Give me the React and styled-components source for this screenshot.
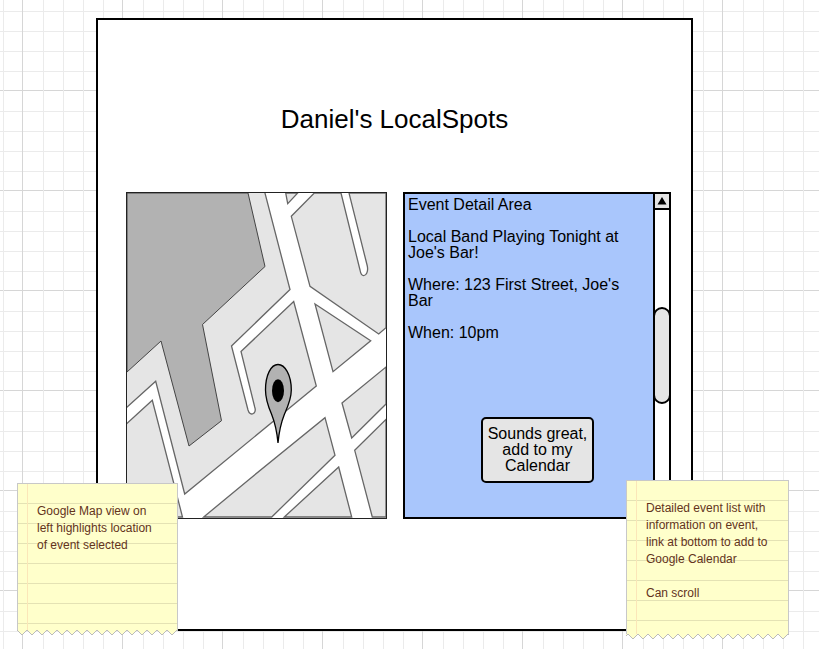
import React from "react";
import styled, { createGlobalStyle } from "styled-components";

const GlobalStyle = createGlobalStyle`
  *, *::before, *::after { box-sizing: border-box; }
  body {
    margin: 0;
    background: #fff;
    color: #000;
    font-family: "Liberation Sans", Arial, sans-serif;
  }
`;

const gridStops = `
  #d6d6d6 0 1px, transparent 1px 21px,
  #ebebeb 21px 22px, transparent 22px 41px,
  #ebebeb 41px 42px, transparent 42px 61px,
  #ebebeb 61px 62px, transparent 62px 81px,
  #ebebeb 81px 82px, transparent 82px 100px`;

const Canvas = styled.div`
  position: relative;
  display: flex;
  min-height: 100vh;
  padding: 18px 126px 18px 96px;
  background-image:
    linear-gradient(to right, ${gridStops}),
    linear-gradient(to bottom, ${gridStops});
  background-size: 100px 100px;
  background-position: 22px 90px;
`;

const Frame = styled.main`
  flex: 1;
  min-width: 0;
  padding: 84px 20px 110px 28px;
  border: 2px solid #000;
  background: #fff;
`;

const Title = styled.h1`
  margin: 0 8px 58px 0;
  text-align: center;
  font-size: 26px;
  line-height: 30px;
  font-weight: 400;
`;

const Columns = styled.div`
  display: grid;
  grid-template-columns: 261fr 268fr;
  gap: 16px;
  min-height: 327px;
`;

const MapView = styled.svg`
  display: block;
  width: 100%;
  height: 100%;
  min-height: 327px;
  border: 1px solid #222;
  background: #fff;
`;

const Detail = styled.section`
  display: flex;
  border: 2px solid #000;
  background: #a9c6fc;
`;

const DetailBody = styled.div`
  flex: 1;
  display: flex;
  flex-direction: column;
  padding: 3px 16px 34px 3px;
  font-size: 16px;
  line-height: 16px;
`;

const DetailHeading = styled.h2`
  margin: 0 0 16px;
  font-size: 16px;
  font-weight: 400;
`;

const Line = styled.p`
  margin: 0 0 16px;
`;

const AddButton = styled.button`
  align-self: center;
  width: 113px;
  margin: auto 0 0 30px;
  padding: 7px 2px;
  border: 2px solid #000;
  border-radius: 5px;
  background: #e5e5e5;
  color: #000;
  font: 16px/16px "Liberation Sans", Arial, sans-serif;
`;

const ScrollTrack = styled.div`
  display: flex;
  flex-direction: column;
  width: 16px;
  border-left: 2px solid #000;
  background: #fff;
`;

const ScrollUp = styled.button`
  display: flex;
  align-items: center;
  justify-content: center;
  height: 16px;
  padding: 0;
  border: 0;
  border-bottom: 2px solid #000;
  background: #e5e5e5;
`;

const ScrollThumb = styled.div`
  height: 97px;
  margin: 97px -2px 0;
  border: 2px solid #000;
  border-radius: 9px;
  background: #e5e5e5;
`;

const NoteBox = styled.aside`
  position: absolute;
  top: ${(p) => p.$top}px;
  ${(p) => p.$side}: ${(p) => p.$inset}px;
  width: ${(p) => p.$width}px;
`;

const NotePaper = styled.div`
  min-height: ${(p) => p.$height}px;
  padding: 19px 16px 0 19px;
  border: 1px solid #c8c8c8;
  border-bottom: 0;
  background:
    linear-gradient(#fbe6b8, #fbe6b8) 9px 0 / 1px 100% no-repeat,
    repeating-linear-gradient(#ffffcb 0 19px, #e4e2b4 19px 20px);
  color: #63331c;
  font-size: 12px;
  line-height: 17px;
`;

const NoteText = styled.p`
  margin: 0 0 17px;
`;

const NoteEdge = styled.svg`
  display: block;
  width: 100%;
  height: 6px;
`;

const blocks = [
  "M0 0H138.7L164 97.5L105.5 154L122 218C124 225 131 222 128.7 215L115 159.5L167.7 109.5L190.3 194L58.7 302L29.7 189.3L0 216Z",
  "M0 232.3L26.3 208.3L56.5 325H0Z",
  "M77.7 325L124 286.7L199 225.7L209 263.3L145.7 325Z",
  "M158.3 325L212.7 275L225.7 325Z",
  "M228.7 258.3L260 227.3V325H246.3Z",
  "M216 211L225.7 246L260 212V175Z",
  "M189 112L244.7 148.7L207 179.7Z",
  "M188.3 1L165.3 24.3L184 94.3L252.7 142L260 135.7V1H223L241.3 74C242.5 80 240 83.7 237.7 83.7C235.5 83.7 234.6 81.5 234 78L215 1Z",
  "M159.7 1L161.7 11.7L171.7 1Z",
];

function LocationMap() {
  return (
    <MapView
      viewBox="1 1 259 325"
      preserveAspectRatio="xMidYMid slice"
      role="img"
      aria-label="Map of the event location"
    >
      <g fill="#e5e5e5" stroke="#666" strokeWidth="1.3">
        {blocks.map((d) => (
          <path key={d} d={d} />
        ))}
      </g>
      <path
        d="M1 1H122L139 74.5L76.5 132.5L95.5 228.7L63 254L35 149L1 180Z"
        fill="#b2b2b2"
        stroke="#444"
        strokeWidth="1"
      />
      <path
        d="M152 251C151 240 149.5 232 145.5 222C142 214 139.5 207 139.5 198C139.5 183 145 172.5 152 172.5S165.3 183 165.3 198C165.3 207 162 214 158.5 222C154.5 232 153 240 152 251Z"
        fill="#b2b2b2"
        stroke="#000"
        strokeWidth="1.3"
      />
      <ellipse cx="152" cy="198.7" rx="6" ry="11.5" />
    </MapView>
  );
}

function Note({ id, top, side, inset, width, height, offset, lines }) {
  return (
    <NoteBox $top={top} $side={side} $inset={inset} $width={width}>
      <NotePaper $height={height}>
        {lines.map((text) => (
          <NoteText key={text}>{text}</NoteText>
        ))}
      </NotePaper>
      <NoteEdge aria-hidden="true">
        <defs>
          <pattern id={id} x={offset} width="10" height="6" patternUnits="userSpaceOnUse">
            <path d="M0 0L5 5L10 0Z" fill="#ffffcb" />
            <path d="M0 0L5 5L10 0" fill="none" stroke="#bbb" />
          </pattern>
        </defs>
        <rect width="100%" height="6" fill={`url(#${id})`} />
      </NoteEdge>
    </NoteBox>
  );
}

export default function App() {
  return (
    <>
      <GlobalStyle />
      <Canvas>
        <Frame>
          <Title>Daniel's LocalSpots</Title>
          <Columns>
            <LocationMap />
            <Detail>
              <DetailBody>
                <DetailHeading>Event Detail Area</DetailHeading>
                <Line>Local Band Playing Tonight at Joe's Bar!</Line>
                <Line>Where: 123 First Street, Joe's Bar</Line>
                <Line>When: 10pm</Line>
                <AddButton type="button">Sounds great, add to my Calendar</AddButton>
              </DetailBody>
              <ScrollTrack>
                <ScrollUp type="button" aria-label="Scroll up">
                  <svg width="10" height="8" viewBox="0 0 10 8" aria-hidden="true">
                    <path d="M5 0L9.5 7.5H0.5Z" />
                  </svg>
                </ScrollUp>
                <ScrollThumb />
              </ScrollTrack>
            </Detail>
          </Columns>
        </Frame>
        <Note
          id="edge-map"
          top={483}
          side="left"
          inset={17}
          width={161}
          height={147}
          offset={0}
          lines={["Google Map view on left highlights location of event selected"]}
        />
        <Note
          id="edge-detail"
          top={480}
          side="right"
          inset={30}
          width={163}
          height={154}
          offset={2}
          lines={[
            "Detailed event list with information on event, link at bottom to add to Google Calendar",
            "Can scroll",
          ]}
        />
      </Canvas>
    </>
  );
}
